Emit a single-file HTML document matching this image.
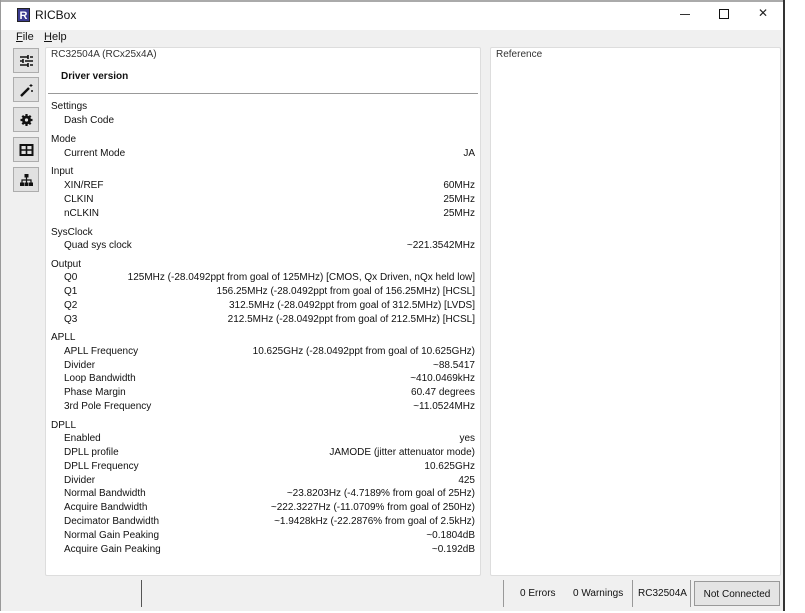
<!DOCTYPE html>
<html><head><meta charset="utf-8"><style>
*{margin:0;padding:0;box-sizing:border-box}
body{width:805px;height:611px;background:#fff;font-family:"Liberation Sans",sans-serif;font-size:10px;color:#111;position:relative;overflow:hidden}
.a{position:absolute;white-space:nowrap}
.r{position:absolute;right:330px;white-space:nowrap;text-align:right}
.c{position:absolute;left:0;top:2px;width:805px;height:611px}
.btn{position:absolute;left:13px;width:26px;height:25px;background:#e1e1e1;border:1px solid #adadad}
.btn svg{position:absolute;left:5px;top:5px}
</style></head><body>
<div class="a" style="left:0;top:0;width:785px;height:611px;background:#f0f0f0;border-left:1px solid #999;border-right:2px solid #333"></div>
<div class="a" style="left:1px;top:0;width:782px;height:30px;background:#fff;border-top:2px solid #aaa"></div>
<div class="a" style="left:17px;top:8px;width:13px;height:14px;background:#3b3b8f;color:#fff;font-weight:bold;font-size:11px;text-align:center;line-height:14px;border:1px solid #222">R</div>
<div class="a" style="left:35px;top:8px;font-size:12px">RICBox</div>
<div class="a" style="left:680px;top:14px;width:10px;height:1px;background:#333"></div>
<div class="a" style="left:719px;top:9px;width:10px;height:10px;border:1px solid #111"></div>
<div class="a" style="left:758px;top:6px;font-size:12px;color:#222">✕</div>
<div class="a" style="left:16px;top:31px;font-size:11px"><u>F</u>ile</div>
<div class="a" style="left:44px;top:31px;font-size:11px"><u>H</u>elp</div>
<div class="btn" style="top:48px"><svg width="15" height="14"><path d="M1 3h8M11 3h3M1 7h3M6 7h8M1 11h8M11 11h3M9 1v4M4 5v4M9 9v4" stroke="#111" stroke-width="1.6"/></svg></div>
<div class="btn" style="top:77px"><svg width="15" height="14"><path d="M2 13L10 5" stroke="#111" stroke-width="2.4"/><path d="M12 1v3M10.5 2.5h3M13 7v2M12 8h2" stroke="#111" stroke-width="1"/></svg></div>
<div class="btn" style="top:107px"><svg width="15" height="14"><circle cx="7.5" cy="7" r="4.5" fill="#111"/><path d="M7.5 1v12M1.5 7h12M3.3 2.8l8.4 8.4M11.7 2.8l-8.4 8.4" stroke="#111" stroke-width="2.2"/><circle cx="7.5" cy="7" r="1.6" fill="#e1e1e1"/></svg></div>
<div class="btn" style="top:137px"><svg width="15" height="14"><rect x="1.5" y="2" width="12" height="10" fill="none" stroke="#111" stroke-width="2"/><path d="M1.5 7h12M7.5 2v10" stroke="#111" stroke-width="1.6"/></svg></div>
<div class="btn" style="top:167px"><svg width="15" height="14"><rect x="5.5" y="1" width="4" height="3.5" fill="#111"/><rect x="1" y="9.5" width="4" height="3.5" fill="#111"/><rect x="5.5" y="9.5" width="4" height="3.5" fill="#111"/><rect x="10" y="9.5" width="4" height="3.5" fill="#111"/><path d="M7.5 4v5.5M3 9.5V7h9v2.5" stroke="#111" stroke-width="1.2" fill="none"/></svg></div>
<div class="a" style="left:45px;top:47px;width:436px;height:529px;background:#fff;border:1px solid #ddd;border-radius:2px"></div>
<div class="a" style="left:490px;top:47px;width:291px;height:529px;background:#fff;border:1px solid #ddd;border-radius:2px"></div>
<div class="a" style="left:48px;top:93px;width:430px;height:1px;background:#999"></div>
<div class="c">
<div class="a" style="left:51px;top:47px;background:#fff;padding:0 2px 0 0;color:#333">RC32504A (RCx25x4A)</div>
<div class="a" style="left:496px;top:47px;color:#333">Reference</div>
<div class="a" style="left:61px;top:69px;font-weight:bold">Driver version</div>
<div class="a" style="left:51px;top:99px">Settings</div>
<div class="a" style="left:64px;top:113px">Dash Code</div>
<div class="a" style="left:51px;top:132px">Mode</div>
<div class="a" style="left:64px;top:146px">Current Mode</div><div class="r" style="top:146px">JA</div>
<div class="a" style="left:51px;top:164px">Input</div>
<div class="a" style="left:64px;top:178px">XIN/REF</div><div class="r" style="top:178px">60MHz</div>
<div class="a" style="left:64px;top:192px">CLKIN</div><div class="r" style="top:192px">25MHz</div>
<div class="a" style="left:64px;top:206px">nCLKIN</div><div class="r" style="top:206px">25MHz</div>
<div class="a" style="left:51px;top:225px">SysClock</div>
<div class="a" style="left:64px;top:238px">Quad sys clock</div><div class="r" style="top:238px">~221.3542MHz</div>
<div class="a" style="left:51px;top:257px">Output</div>
<div class="a" style="left:64px;top:270px">Q0</div><div class="r" style="top:270px">125MHz (-28.0492ppt from goal of 125MHz) [CMOS, Qx Driven, nQx held low]</div>
<div class="a" style="left:64px;top:284px">Q1</div><div class="r" style="top:284px">156.25MHz (-28.0492ppt from goal of 156.25MHz) [HCSL]</div>
<div class="a" style="left:64px;top:298px">Q2</div><div class="r" style="top:298px">312.5MHz (-28.0492ppt from goal of 312.5MHz) [LVDS]</div>
<div class="a" style="left:64px;top:312px">Q3</div><div class="r" style="top:312px">212.5MHz (-28.0492ppt from goal of 212.5MHz) [HCSL]</div>
<div class="a" style="left:51px;top:330px">APLL</div>
<div class="a" style="left:64px;top:344px">APLL Frequency</div><div class="r" style="top:344px">10.625GHz (-28.0492ppt from goal of 10.625GHz)</div>
<div class="a" style="left:64px;top:358px">Divider</div><div class="r" style="top:358px">~88.5417</div>
<div class="a" style="left:64px;top:371px">Loop Bandwidth</div><div class="r" style="top:371px">~410.0469kHz</div>
<div class="a" style="left:64px;top:385px">Phase Margin</div><div class="r" style="top:385px">60.47 degrees</div>
<div class="a" style="left:64px;top:399px">3rd Pole Frequency</div><div class="r" style="top:399px">~11.0524MHz</div>
<div class="a" style="left:51px;top:418px">DPLL</div>
<div class="a" style="left:64px;top:431px">Enabled</div><div class="r" style="top:431px">yes</div>
<div class="a" style="left:64px;top:445px">DPLL profile</div><div class="r" style="top:445px">JAMODE (jitter attenuator mode)</div>
<div class="a" style="left:64px;top:459px">DPLL Frequency</div><div class="r" style="top:459px">10.625GHz</div>
<div class="a" style="left:64px;top:473px">Divider</div><div class="r" style="top:473px">425</div>
<div class="a" style="left:64px;top:486px">Normal Bandwidth</div><div class="r" style="top:486px">~23.8203Hz (-4.7189% from goal of 25Hz)</div>
<div class="a" style="left:64px;top:500px">Acquire Bandwidth</div><div class="r" style="top:500px">~222.3227Hz (-11.0709% from goal of 250Hz)</div>
<div class="a" style="left:64px;top:514px">Decimator Bandwidth</div><div class="r" style="top:514px">~1.9428kHz (-22.2876% from goal of 2.5kHz)</div>
<div class="a" style="left:64px;top:528px">Normal Gain Peaking</div><div class="r" style="top:528px">~0.1804dB</div>
<div class="a" style="left:64px;top:542px">Acquire Gain Peaking</div><div class="r" style="top:542px">~0.192dB</div>
<div class="a" style="left:520px;top:586px">0 Errors</div>
<div class="a" style="left:573px;top:586px">0 Warnings</div>
<div class="a" style="left:638px;top:586px">RC32504A</div>
</div>
<div class="a" style="left:141px;top:580px;width:1px;height:27px;background:#555"></div>
<div class="a" style="left:503px;top:580px;width:1px;height:27px;background:#999"></div>
<div class="a" style="left:632px;top:580px;width:1px;height:27px;background:#999"></div>
<div class="a" style="left:690px;top:580px;width:1px;height:27px;background:#999"></div>
<div class="a" style="left:694px;top:581px;width:86px;height:25px;background:#e4e4e4;border:1px solid #999;text-align:center;line-height:25px">Not Connected</div>
</body></html>
